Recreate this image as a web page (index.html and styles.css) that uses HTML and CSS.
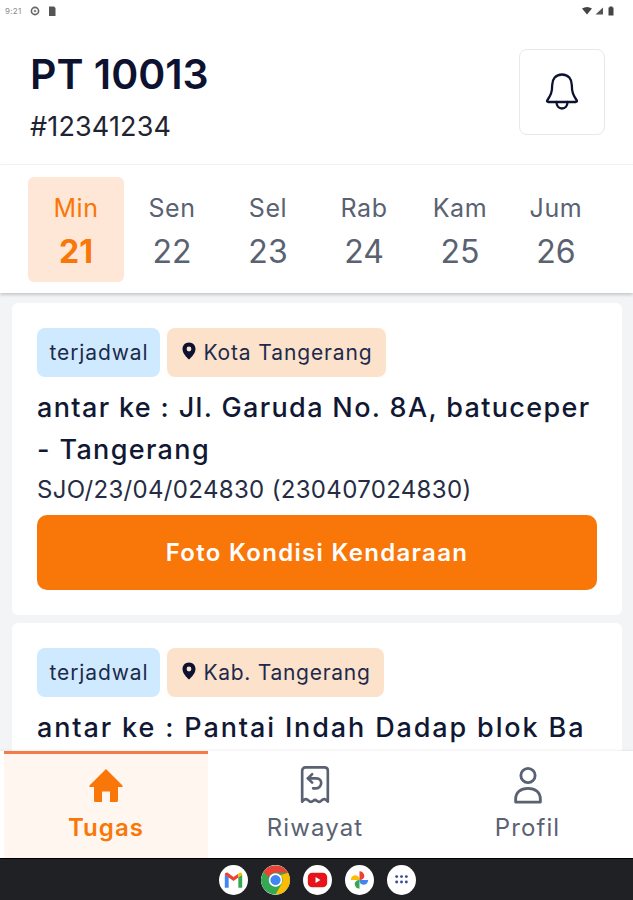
FILE: index.html
```html
<!DOCTYPE html>
<html lang="id">
<head>
<meta charset="utf-8">
<title>PT 10013</title>
<link rel="stylesheet" href="styles.css">
</head>
<body>
<div class="page">
  <div class="status">
    <div class="status-left">
      <span class="clock">9:21</span>
      <svg class="st-ico" viewBox="0 0 10 10"><circle cx="5" cy="5" r="3.6" fill="none" stroke="#666" stroke-width="1.6"/><circle cx="5" cy="5" r="1.3" fill="#888"/></svg>
      <svg class="st-ico" viewBox="0 0 10 10"><path d="M2 .5h5l1.500 1.500v8h-6.500z" fill="#555"/></svg>
    </div>
    <div class="status-right">
      <svg class="st-ico" viewBox="0 0 10 10"><path d="M0 2.500Q5-.5 10 2.500L5 8.500z" fill="#444"/></svg>
      <svg class="st-ico sig" viewBox="0 0 10 10"><path d="M9 1.500v7H1.500z" fill="#555"/></svg>
      <svg class="st-ico bat" viewBox="0 0 6 10"><path d="M1.500 1.500V.6h3v.9h1v8h-5v-8z" fill="#444"/></svg>
    </div>
  </div>
  <header class="head">
    <div class="head-text">
      <h1 class="name">PT 10013</h1>
      <div class="code">#12341234</div>
    </div>
    <button class="bell-btn" aria-label="Notifikasi">
      <svg class="bell" viewBox="0 0 34 38" fill="none" stroke="#0c1230" stroke-width="2.300" stroke-linejoin="round" stroke-linecap="round"><path d="M17 2.500c-6.400 0-9.800 4.800-9.800 10.500 0 7.500-1.600 10.500-5 15.500-.5 1 .2 1.500 1 1.500h27.600c.8 0 1.500-.5 1-1.500-3.400-5-5-8-5-15.500 0-5.700-3.400-10.500-9.800-10.500z"/><path d="M11.500 30c0 4 2.400 6.500 5.500 6.500s5.500-2.500 5.500-6.500"/></svg>
    </button>
  </header>
  <nav class="days">
    <div class="day active"><span class="dn">Min</span><span class="dd">21</span></div>
    <div class="day"><span class="dn">Sen</span><span class="dd">22</span></div>
    <div class="day"><span class="dn">Sel</span><span class="dd">23</span></div>
    <div class="day"><span class="dn">Rab</span><span class="dd">24</span></div>
    <div class="day"><span class="dn">Kam</span><span class="dd">25</span></div>
    <div class="day"><span class="dn">Jum</span><span class="dd">26</span></div>
  </nav>
  <main class="list">
    <article class="card">
      <div class="chips">
        <span class="chip blue">terjadwal</span>
        <span class="chip peach"><svg class="pin" viewBox="0 0 14 18"><path fill-rule="evenodd" d="M7 .5C3.300.5.500 3.300.500 7c0 4.300 4.200 8.500 6.500 10.500 2.300-2 6.500-6.200 6.500-10.500C13.500 3.300 10.700.5 7 .5zM7 4.600a2.400 2.400 0 1 1 0 4.800 2.400 2.400 0 0 1 0-4.800z" fill="#0c1230"/></svg>Kota Tangerang</span>
      </div>
      <h2 class="addr">antar ke : Jl. Garuda No. 8A, batuceper - Tangerang</h2>
      <p class="sjo">SJO/23/04/024830 (230407024830)</p>
      <button class="cta">Foto Kondisi Kendaraan</button>
    </article>
    <article class="card">
      <div class="chips">
        <span class="chip blue">terjadwal</span>
        <span class="chip peach tight"><svg class="pin" viewBox="0 0 14 18"><path fill-rule="evenodd" d="M7 .5C3.300.5.500 3.300.500 7c0 4.300 4.200 8.500 6.500 10.500 2.300-2 6.500-6.200 6.500-10.500C13.500 3.300 10.700.5 7 .5zM7 4.600a2.400 2.400 0 1 1 0 4.800 2.400 2.400 0 0 1 0-4.800z" fill="#0c1230"/></svg>Kab. Tangerang</span>
      </div>
      <h2 class="addr wide">antar ke : Pantai Indah Dadap blok Ba</h2>
    </article>
  </main>
  <footer class="tabs">
    <div class="tab on">
      <svg class="tab-ico" viewBox="0 0 36 36"><path d="M18 2 1.500 18.500c-.6.700-.2 1.500.6 1.500H6v13.500c0 .8.700 1.500 1.500 1.500H14V24.500h8V35h6.500c.8 0 1.500-.7 1.500-1.500V20h3.900c.8 0 1.200-.8.600-1.500z" fill="#f97608"/></svg>
      <span class="tab-label">Tugas</span>
    </div>
    <div class="tab">
      <svg class="tab-ico" viewBox="0 0 36 40" fill="none" stroke="#5a6272" stroke-width="2.800" stroke-linecap="round" stroke-linejoin="round"><path d="M8 1.500h20c2.200 0 3.500 1.500 3.500 3.500v32.500c-2.800-3.400-4.700-3.200-6.500-1.200-1.800 2-3.400 2-5.200.4-1.300-1.300-2.300-1.300-3.600 0-1.800 1.600-3.400 1.600-5.200-.4-1.800-2-3.700-2.200-6.500 1.200V5c0-2 1.300-3.500 3.500-3.500z"/><path d="M15 8.500l-4.500 4.500 4.500 4.500"/><path d="M10.500 13h9c3.500 0 5 2.500 5 5s-2 5.500-5.500 5.500h-3"/></svg>
      <span class="tab-label">Riwayat</span>
    </div>
    <div class="tab">
      <svg class="tab-ico" viewBox="0 0 36 40" fill="none" stroke="#5a6272" stroke-width="3" stroke-linejoin="round"><circle cx="18" cy="10" r="7.500"/><path d="M5 38v-3c0-7 5-11.500 13-11.500S31 28 31 35v3z"/></svg>
      <span class="tab-label">Profil</span>
    </div>
  </footer>
  <div class="dock">
    <span class="app"><svg viewBox="0 0 30 30"><path d="M6 23V9.500L10 12v11z" fill="#4285f4"/><path d="M20 23V12l4-2.500V23z" fill="#34a853"/><path d="M6 9.500 15 16l5-3.700V8.500L15 12 9 7.500C7.500 7 6 8 6 9.500z" fill="#ea4335"/><path d="M20 8.500l1.500-1C23 7 24 8 24 9.500L20 12.300z" fill="#fbbc04"/></svg></span>
    <span class="app"><svg viewBox="0 0 30 30"><circle cx="15" cy="15" r="15" fill="#34a853"/><path d="M15 0a15 15 0 0 1 13 7.500H15a7.500 7.500 0 0 0-7 4.800L2.500 6.500A15 15 0 0 1 15 0z" fill="#ea4335"/><path d="M28 7.500A15 15 0 0 1 15 30l6.500-11.300A7.500 7.500 0 0 0 20 10z" fill="#fbbc04"/><circle cx="15" cy="15" r="7" fill="#fff"/><circle cx="15" cy="15" r="5.300" fill="#4285f4"/></svg></span>
    <span class="app"><svg viewBox="0 0 30 30"><rect x="5" y="7.500" width="20" height="15" rx="4.500" fill="#e6141b"/><path d="M13 12v6l5-3z" fill="#fff"/></svg></span>
    <span class="app"><svg viewBox="0 0 30 30"><path d="M15 15H6a5 5 0 0 1 5-5 4.500 4.500 0 0 1 4 5z" fill="#fbbc04"/><path d="M15 15V6a5 5 0 0 1 5 5 4.500 4.500 0 0 1-5 4z" fill="#ea4335"/><path d="M15 15h9a5 5 0 0 1-5 5 4.500 4.500 0 0 1-4-5z" fill="#4285f4"/><path d="M15 15v9a5 5 0 0 1-5-5 4.500 4.500 0 0 1 5-4z" fill="#34a853"/></svg></span>
    <span class="app"><svg viewBox="0 0 30 30" fill="#3c4a9a"><circle cx="10" cy="11.500" r="1.500"/><circle cx="15" cy="11.500" r="1.500"/><circle cx="20" cy="11.500" r="1.500"/><circle cx="10" cy="17" r="1.500"/><circle cx="15" cy="17" r="1.500"/><circle cx="20" cy="17" r="1.500"/></svg></span>
  </div>
</div>
</body>
</html>
```
FILE: styles.css
```css
* { box-sizing: border-box; }
html, body { margin: 0; padding: 0; }
body { font-family: Inter, "Noto Sans", sans-serif; background: #fff; }
.page { width: 633px; height: 900px; display: flex; flex-direction: column; overflow: hidden; }

.status { height: 22px; padding: 0 19px 0 5px; display: flex; justify-content: space-between; align-items: center; flex: none; }
.status-left, .status-right { display: flex; align-items: center; }
.status-left { gap: 7px; }
.status-right { gap: 2px; }
.clock { font-size: 8px; color: #8a8a8a; margin-right: 1px; letter-spacing: .3px; }
.st-ico { width: 10px; height: 10px; display: block; }
.st-ico.bat { width: 6px; margin-left: 2px; }

.head { flex: none; height: 143px; padding: 27px 28px 0 30px; display: flex; justify-content: space-between; align-items: flex-start; border-bottom: 1px solid #f1f2f3; }
.name { margin: 0; font-size: 41px; line-height: 50px; font-weight: 600; color: #0c1230; }
.code { margin-top: 11px; font-size: 27px; line-height: 34px; color: #1f2433; letter-spacing: .15px; }
.bell-btn { width: 86px; height: 86px; background: #fff; border: 1px solid #e6e8eb; border-radius: 8px; padding: 0 0 2px; display: flex; align-items: center; justify-content: center; }
.bell { width: 34px; height: 38px; }

.days { flex: none; height: 128px; padding: 12px 28px 0 28px; display: flex; background: #fff; box-shadow: 0 2px 3px rgba(0,0,0,.18); position: relative; z-index: 1; align-items: flex-start; }
.day { width: 96px; height: 105px; display: flex; flex-direction: column; align-items: center; border-radius: 6px; padding-top: 15px; color: #5a6272; }
.day.active { background: #fee7d6; color: #f97608; }
.dn { font-size: 25px; line-height: 32px; letter-spacing: .6px; }
.dd { font-size: 32px; line-height: 40px; margin-top: 8px; }
.active .dd { font-weight: 700; }

.list { flex: 1; min-height: 0; overflow: hidden; background: #f3f4f5; padding: 10px 11px 0 12px; display: flex; flex-direction: column; gap: 8px; }
.card { flex: none; background: #fff; border-radius: 6px; padding: 25px; }
.chips { display: flex; gap: 7px; }
.chip { height: 49px; padding: 0 12px 0 12.500px; border-radius: 8px; display: flex; align-items: center; font-size: 21px; color: #1d2a4d; letter-spacing: .88px; }
.blue { background: #cfeafe; }
.peach { background: #fce2cb; padding: 0 13px 0 15px; }
.peach.tight { letter-spacing: .72px; }
.pin { width: 14px; height: 18px; margin: -4px 7px 0 0; flex: none; }
.addr { margin: 10px 0 0; font-size: 27px; line-height: 42px; font-weight: 500; color: #111833; letter-spacing: 1.35px; }
.addr.wide { letter-spacing: 1.87px; }
.sjo { margin: 0; font-size: 24px; line-height: 38px; color: #252c44; letter-spacing: .33px; }
.cta { display: block; width: 100%; height: 75px; margin-top: 6px; border: 0; border-radius: 10px; background: #f97608; color: #fff; font: 600 24px Inter, sans-serif; letter-spacing: 1.3px; }

.tabs { flex: none; height: 107px; display: grid; grid-template-columns: 204px 1fr 211px; padding-left: 4px; background: #fff; position: relative; z-index: 1; box-shadow: 0 -1px 2px rgba(0,0,0,.06); }
.tab { display: flex; flex-direction: column; align-items: center; padding-top: 15px; color: #5a6272; }
.tab.on { background: #fff6ef; border-top: 3px solid #f47a4a; padding-top: 12px; color: #f97608; }
.tab-ico { width: 36px; height: 38px; display: block; }
.tab-label { font-size: 24px; line-height: 30px; margin-top: 9px; letter-spacing: 1.1px; }
.on .tab-label { font-weight: 600; }

.dock { flex: none; height: 42px; background: #202124; display: flex; justify-content: center; align-items: center; gap: 13px; border-top: 1px solid #000; padding-left: 1px; }
.app { width: 29px; height: 30px; border-radius: 50%; background: #fff; display: block; overflow: hidden; }
.app svg { width: 100%; height: 100%; display: block; }
```
